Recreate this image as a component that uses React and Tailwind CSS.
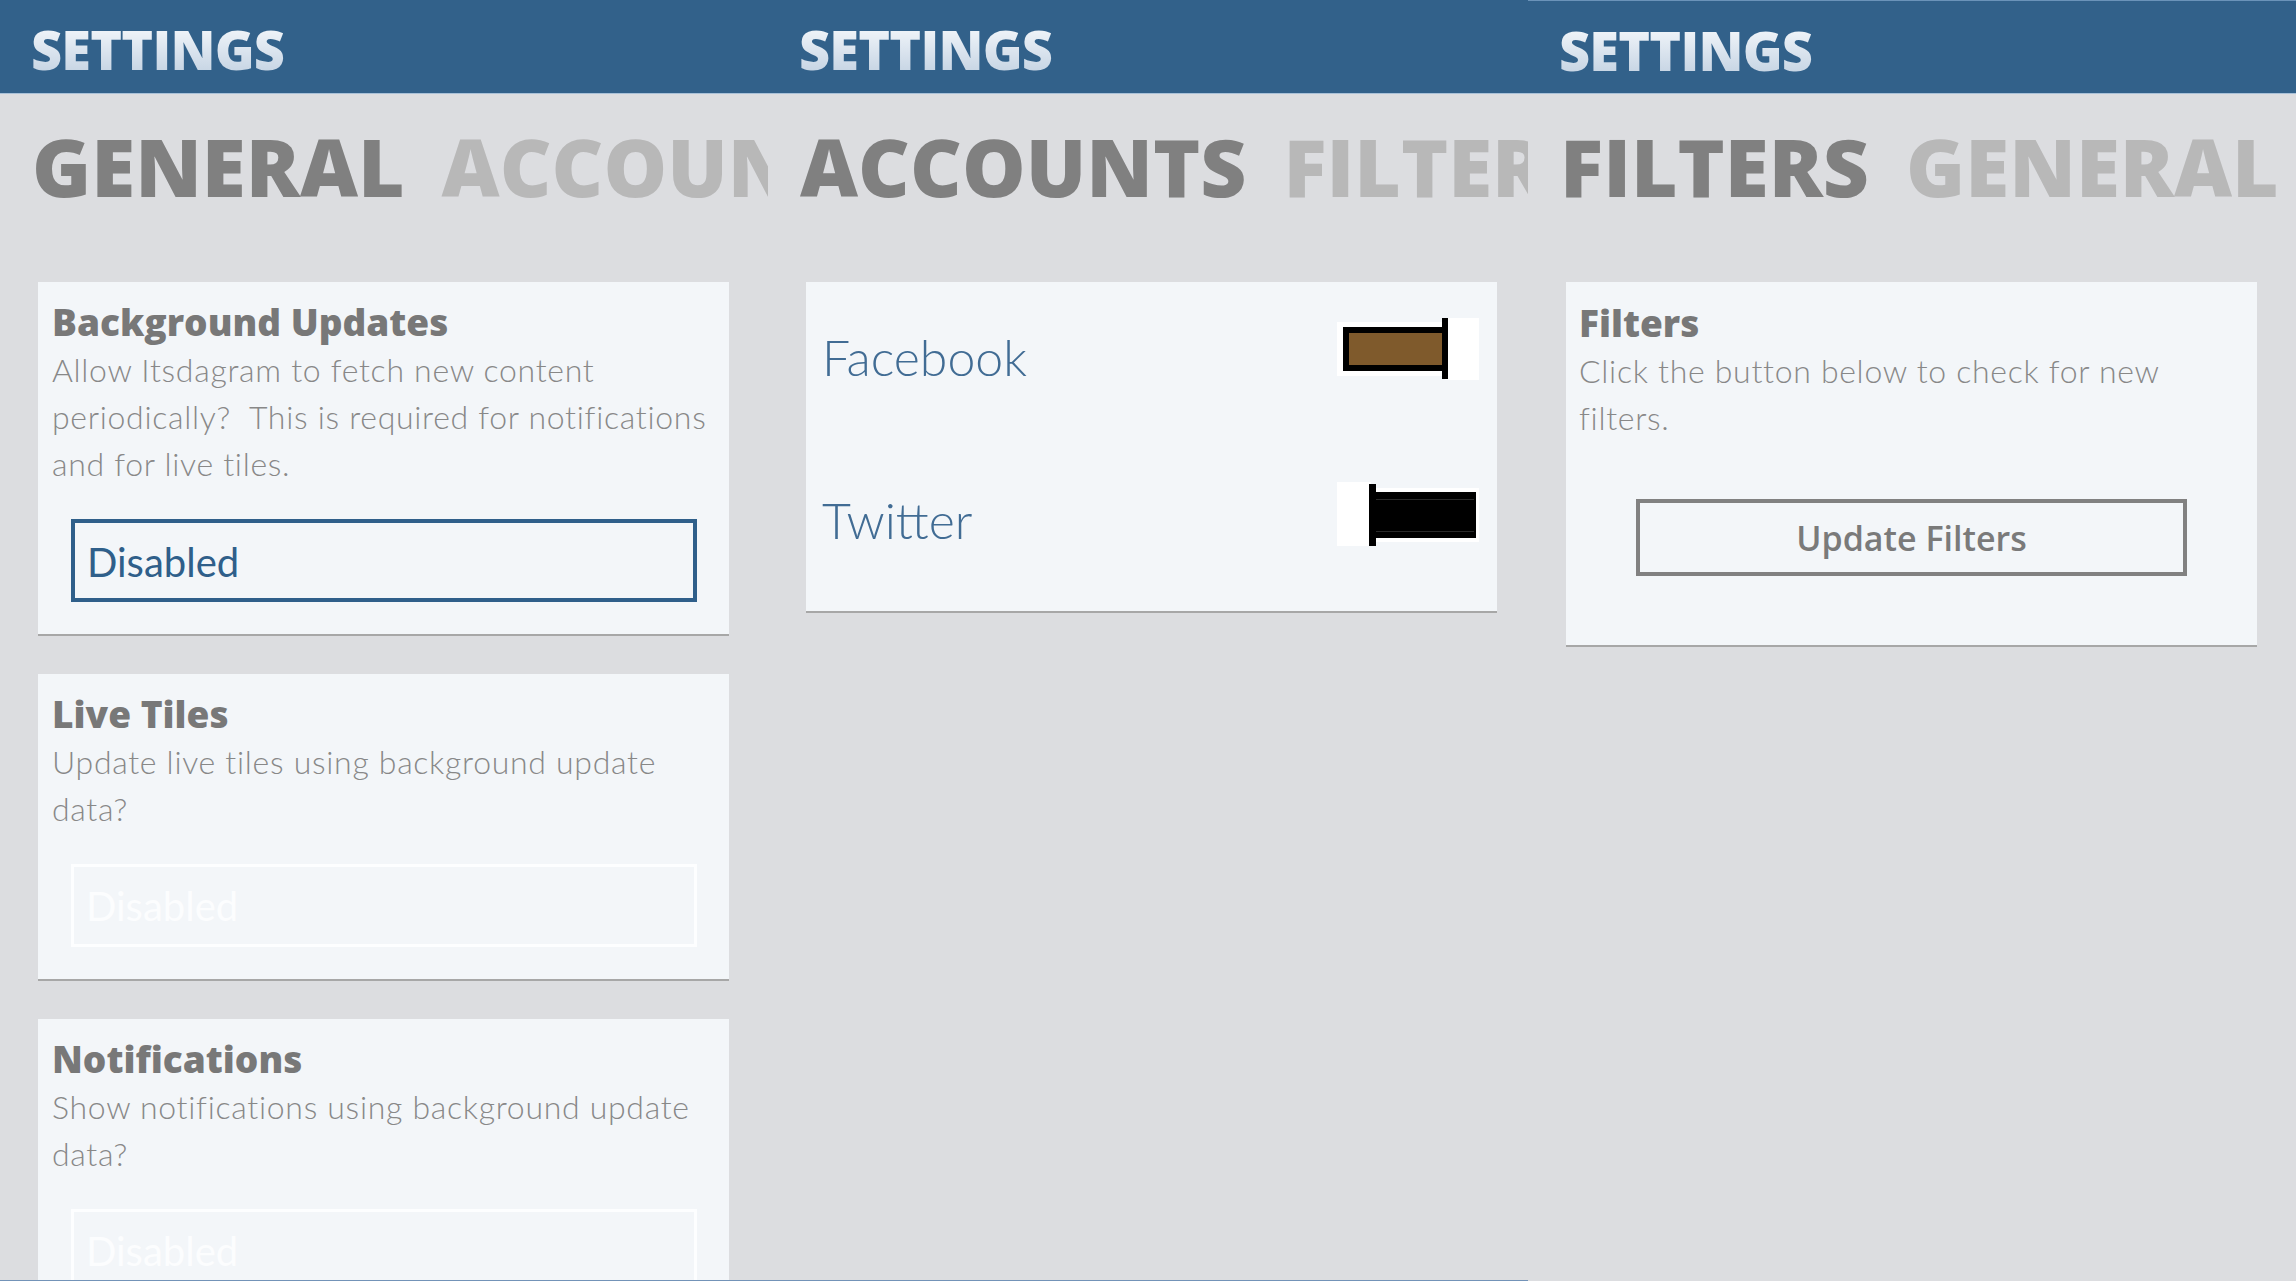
import React from 'react';

const heavy = "font-['Open_Sans',sans-serif]";
const light = "font-['Lato',sans-serif]";

const Header = ({ third }) => (
  <div
    className={`h-[94px] bg-[#32618a] border-b border-[#a9c1d8] pl-[31px] pt-[22px] ${
      third ? 'border-t border-t-[#6b93b9]' : ''
    }`}
  >
    <div
      className={`${heavy} font-extrabold text-[54px] leading-none tracking-[-0.8px] bg-linear-to-b from-[#f6f9fc] to-[#c3d2e2] bg-clip-text text-transparent w-fit`}
    >
      SETTINGS
    </div>
  </div>
);

const Tabs = ({ active, next }) => (
  <div className={`${heavy} font-extrabold text-[80px] leading-none flex gap-[37px] whitespace-nowrap pl-[32px] mt-[32px]`}>
    <span className="text-[#808080]">{active}</span>
    <span className="text-[#b8b8b8]">{next}</span>
  </div>
);

const Card = ({ children, className = '' }) => (
  <div className={`w-[691px] ml-[38px] bg-[#f3f6f9] border-b-2 border-[#a7a7a7] ${className}`}>
    {children}
  </div>
);

const Description = ({ lines }) => (
  <div className={`${light} font-light text-[32px] tracking-[0.7px] leading-[47px] text-[#888888] mt-[6px]`}>
    {lines.map((l) => (
      <div key={l} className="whitespace-pre">
        {l}
      </div>
    ))}
  </div>
);

const Title = ({ children }) => (
  <div className={`${heavy} font-extrabold text-[37px] leading-none text-[#787878]`}>{children}</div>
);

const SettingCard = ({ title, lines, enabled, className }) => (
  <Card className={`pt-[21px] pb-[32px] ${className}`}>
    <div className="pl-[14px]">
      <Title>{title}</Title>
      <Description lines={lines} />
    </div>
    <div
      className={`ml-[33px] mt-[32px] w-[626px] h-[83px] pl-[12px] pt-[19px] ${
        enabled ? 'border-4 border-[#2f5f8a]' : 'border-[3px] border-[#fdfeff]'
      }`}
    >
      <div
        className={`${light} text-[40px] leading-none ${enabled ? 'text-[#2f5f8a]' : 'text-[#fcfdfe]'}`}
      >
        Disabled
      </div>
    </div>
  </Card>
);

const ToggleOn = () => (
  <svg width="142" height="62" viewBox="0 0 142 62">
    <rect x="0" y="4" width="142" height="54" fill="#ffffff" />
    <rect x="108" y="0" width="34" height="62" fill="#ffffff" />
    <rect x="6" y="9" width="104" height="44" fill="#000000" />
    <rect x="12" y="15" width="93" height="32" fill="#7f5a2c" />
    <rect x="105" y="0" width="6" height="61" fill="#000000" />
  </svg>
);

const ToggleOff = () => (
  <svg width="142" height="64" viewBox="0 0 142 64">
    <rect x="0" y="0" width="34" height="64" fill="#ffffff" />
    <rect x="34" y="6" width="108" height="54" fill="#ffffff" />
    <rect x="33" y="10" width="106" height="46" fill="#000000" />
    <rect x="39" y="17" width="98" height="1" fill="#2a2a2a" />
    <rect x="39" y="49" width="98" height="1" fill="#2a2a2a" />
    <rect x="32" y="2" width="7" height="62" fill="#000000" />
  </svg>
);

const AccountRow = ({ name, on, textTop }) => (
  <div className="flex justify-between items-start pl-[16px] pr-[18px]">
    <div
      className={`${light} font-light text-[50px] leading-none text-[#416c94]`}
      style={{ marginTop: textTop }}
    >
      {name}
    </div>
    {on ? <ToggleOn /> : <ToggleOff />}
  </div>
);

export default function App() {
  return (
    <div className="flex w-[2296px] h-[1281px] overflow-hidden bg-[#dcdde0]">
      {/* General */}
      <div className="w-[768px] shrink-0 h-[1281px] overflow-hidden border-b border-[#7393b8]">
        <Header />
        <Tabs active="GENERAL" next="ACCOUNTS" />
        <SettingCard
          className="mt-[76px]"
          title="Background Updates"
          enabled
          lines={[
            'Allow Itsdagram to fetch new content',
            'periodically?  This is required for notifications',
            'and for live tiles.',
          ]}
        />
        <SettingCard
          className="mt-[38px]"
          title="Live Tiles"
          lines={['Update live tiles using background update', 'data?']}
        />
        <SettingCard
          className="mt-[38px]"
          title="Notifications"
          lines={['Show notifications using background update', 'data?']}
        />
      </div>

      {/* Accounts */}
      <div className="w-[760px] shrink-0 h-[1281px] overflow-hidden border-b border-[#7393b8]">
        <Header />
        <Tabs active="ACCOUNTS" next="FILTERS" />
        <Card className="mt-[76px] pt-[36px] pb-[65px]">
          <AccountRow name="Facebook" on textTop="14px" />
          <div className="mt-[100px]">
            <AccountRow name="Twitter" textTop="13px" />
          </div>
        </Card>
      </div>

      {/* Filters */}
      <div className="flex-1 h-[1281px] overflow-hidden">
        <Header third />
        <Tabs active="FILTERS" next="GENERAL" />
        <Card className="mt-[76px] pt-[22px] pb-[69px]">
          <div className="pl-[13px]">
            <Title>Filters</Title>
            <Description lines={['Click the button below to check for new', 'filters.']} />
          </div>
          <div className="flex justify-center mt-[58px]">
            <button
              className={`w-[551px] h-[77px] border-4 border-[#818181] flex items-center justify-center ${heavy} font-semibold text-[34px] leading-none text-[#7a7a7a]`}
            >
              Update Filters
            </button>
          </div>
        </Card>
      </div>
    </div>
  );
}
